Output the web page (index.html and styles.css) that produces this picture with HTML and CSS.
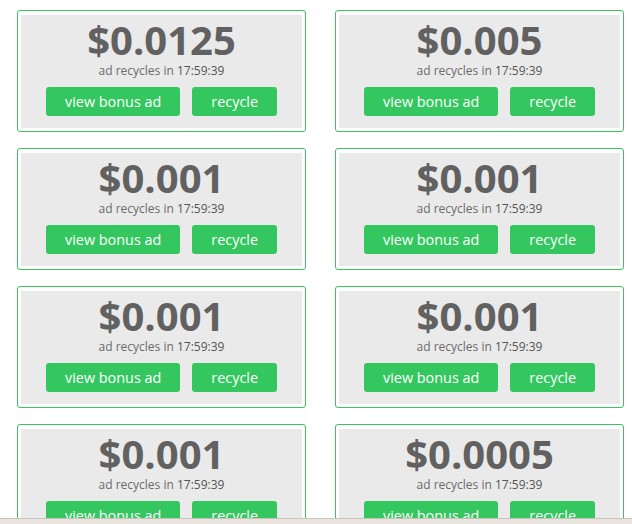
FILE: index.html
```html
<!DOCTYPE html>
<html lang="en">
<head>
<meta charset="utf-8">
<title>Bonus ads</title>
<link rel="stylesheet" href="styles.css">
</head>
<body>
<main class="grid">
  <section class="card">
    <div class="card-inner">
      <div class="price">$0.0125</div>
      <div class="timer">ad recycles in <span class="time">17:59:39</span></div>
      <div class="actions"><button class="btn">view bonus ad</button><button class="btn">recycle</button></div>
    </div>
  </section>
  <section class="card">
    <div class="card-inner">
      <div class="price">$0.005</div>
      <div class="timer">ad recycles in <span class="time">17:59:39</span></div>
      <div class="actions"><button class="btn">view bonus ad</button><button class="btn">recycle</button></div>
    </div>
  </section>
  <section class="card">
    <div class="card-inner">
      <div class="price">$0.001</div>
      <div class="timer">ad recycles in <span class="time">17:59:39</span></div>
      <div class="actions"><button class="btn">view bonus ad</button><button class="btn">recycle</button></div>
    </div>
  </section>
  <section class="card">
    <div class="card-inner">
      <div class="price">$0.001</div>
      <div class="timer">ad recycles in <span class="time">17:59:39</span></div>
      <div class="actions"><button class="btn">view bonus ad</button><button class="btn">recycle</button></div>
    </div>
  </section>
  <section class="card">
    <div class="card-inner">
      <div class="price">$0.001</div>
      <div class="timer">ad recycles in <span class="time">17:59:39</span></div>
      <div class="actions"><button class="btn">view bonus ad</button><button class="btn">recycle</button></div>
    </div>
  </section>
  <section class="card">
    <div class="card-inner">
      <div class="price">$0.001</div>
      <div class="timer">ad recycles in <span class="time">17:59:39</span></div>
      <div class="actions"><button class="btn">view bonus ad</button><button class="btn">recycle</button></div>
    </div>
  </section>
  <section class="card">
    <div class="card-inner">
      <div class="price">$0.001</div>
      <div class="timer">ad recycles in <span class="time">17:59:39</span></div>
      <div class="actions"><button class="btn">view bonus ad</button><button class="btn">recycle</button></div>
    </div>
  </section>
  <section class="card">
    <div class="card-inner">
      <div class="price">$0.0005</div>
      <div class="timer">ad recycles in <span class="time">17:59:39</span></div>
      <div class="actions"><button class="btn">view bonus ad</button><button class="btn">recycle</button></div>
    </div>
  </section>
</main>
<div class="bottom-bar"></div>
</body>
</html>
```
FILE: styles.css
```css
html, body {
  margin: 0;
  padding: 0;
  background: #ffffff;
  overflow: hidden;
}

body {
  font-family: "Open Sans", "Liberation Sans", sans-serif;
  color: #616161;
}

.grid {
  display: grid;
  grid-template-columns: 289px 289px;
  column-gap: 29px;
  row-gap: 16px;
  padding: 10px 0 0 17px;
}

.card {
  border: 1px solid #3cc45e;
  border-radius: 3px;
  padding: 4px 3px 3px;
}

.card-inner {
  background: #eaeaea;
  padding: 0 0 12px;
  text-align: center;
}

.price {
  font-size: 40px;
  font-weight: 700;
  line-height: 49px;
  color: #616161;
}

.timer {
  font-size: 12px;
  line-height: 14px;
  color: #6a6a6a;
}

.time {
  color: #555555;
}

.actions {
  margin-top: 9px;
  display: flex;
  justify-content: center;
  gap: 12px;
}

.btn {
  height: 29px;
  padding: 0 19px;
  border: none;
  border-radius: 3px;
  background: #34c75f;
  color: #ffffff;
  font-family: "Open Sans", "Liberation Sans", sans-serif;
  font-size: 14.4px;
  line-height: 29px;
}

.bottom-bar {
  position: fixed;
  left: 0;
  right: 0;
  bottom: 0;
  height: 5px;
  background: #e8e4dd;
  border-top: 1px solid #c9c4bb;
}
```
